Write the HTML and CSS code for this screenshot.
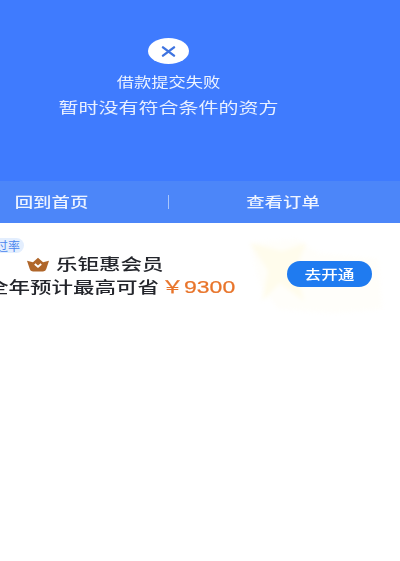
FILE: index.html
```html
<!DOCTYPE html>
<html lang="zh">
<head>
<meta charset="utf-8">
<title>借款提交失败</title>
<link rel="stylesheet" href="styles.css">
</head>
<body>
<main class="page">
  <section class="hero">
    <div class="badge">
      <svg class="badge-x" viewBox="0 0 16 12" aria-hidden="true"><path d="M2 1.5 L14 10.5 M14 1.5 L2 10.5"/></svg>
    </div>
    <p class="status">借款提交失败</p>
    <p class="reason">暂时没有符合条件的资方</p>
  </section>
  <nav class="actions">
    <a class="action action-home">回到首页</a>
    <span class="rule"></span>
    <a class="action action-order">查看订单</a>
  </nav>
  <section class="promo">
    <svg class="glow" viewBox="0 0 135 75" aria-hidden="true">
      <path class="glow-soft" d="M2 4 L50 0 L70 14 L130 20 L134 70 L86 74 L30 70 L12 46 Z"/>
      <path class="glow-star" d="M2 4 L34 12 L58 4 L48 30 L56 62 L32 44 L14 62 L20 32 Z"/>
    </svg>
    <div class="promo-copy">
      <span class="tag">过率</span>
      <div class="promo-title">
        <svg class="crown" viewBox="0 0 24 16" aria-hidden="true">
          <path class="crown-body" d="M0 4 L6.5 5.5 L12 0.5 L17.5 5.5 L24 4 L21 13 Q20.5 15.5 17.5 15.5 L6.5 15.5 Q3.5 15.5 3 13 Z"/>
          <path class="crown-mark" d="M8.5 7.5 L12 10.5 L15.5 7.5"/>
        </svg>
        <span class="wide-text">乐钜惠会员</span>
      </div>
      <div class="promo-save">
        <span class="wide-text">全年预计最高可省</span>
        <span class="amount">￥9300</span>
      </div>
    </div>
    <a class="open-btn"><span>去开通</span></a>
  </section>
</main>
</body>
</html>
```
FILE: styles.css
```css
html, body {
  margin: 0;
  padding: 0;
  background: #fff;
}
body {
  width: 400px;
  height: 561px;
  overflow: hidden;
  font-family: "Noto Sans CJK SC", "Liberation Sans", sans-serif;
}
.page {
  display: flex;
  flex-direction: column;
}
.hero {
  height: 181px;
  box-sizing: border-box;
  padding: 38px 63px 0 0;
  background: #3f7bfe;
  color: #fff;
  display: flex;
  flex-direction: column;
  align-items: center;
}
.hero p {
  margin: 0;
  white-space: nowrap;
}
.badge {
  width: 41px;
  height: 26px;
  border-radius: 50%;
  background: #fff;
  display: flex;
  align-items: center;
  justify-content: center;
}
.badge-x {
  width: 15px;
  height: 11px;
  fill: none;
  stroke: #3f74e0;
  stroke-width: 2.6;
  stroke-linecap: round;
}
.status {
  margin-top: 8px !important;
  font-size: 17.3px;
  line-height: 20px;
  transform: scaleY(0.76);
  color: #eef4ff;
}
.reason {
  margin-top: 3px !important;
  font-size: 20px;
  line-height: 24px;
  transform: scaleY(0.76);
  color: #e8f0ff;
}
.actions {
  height: 42px;
  background: #4c86f9;
  display: flex;
  align-items: center;
  margin-left: -65px;
  width: 467px;
  color: #eef4ff;
  font-size: 18.4px;
  font-weight: 500;
}
.action {
  flex: none;
  margin-top: -2px;
  text-align: center;
  transform: scaleY(0.72);
  line-height: 24px;
  white-space: nowrap;
}
.action-home {
  width: 233px;
}
.action-order {
  width: 228px;
}
.rule {
  width: 1px;
  height: 14px;
  background: #a9c6fb;
}
.promo {
  position: relative;
  height: 90px;
  display: flex;
  align-items: flex-start;
}
.glow {
  position: absolute;
  left: 248px;
  top: 16px;
  width: 135px;
  height: 75px;
  filter: blur(2px);
}
.glow-soft {
  fill: #fffefa;
}
.glow-star {
  fill: #fffcec;
}
.promo-copy {
  position: relative;
  margin-left: -13px;
  padding-top: 15px;
  width: 300px;
  flex: none;
}
.tag {
  display: block;
  width: 37px;
  height: 15px;
  border-radius: 4px 8px 8px 0;
  background: #e3eefe;
  color: #4a86ee;
  font-size: 12px;
  line-height: 15px;
  text-align: right;
  padding-right: 4px;
  box-sizing: border-box;
}
.promo-title {
  display: flex;
  align-items: center;
  margin-top: -1px;
  margin-left: 40px;
  height: 24px;
}
.crown {
  width: 22px;
  height: 15px;
  flex: none;
}
.crown-body {
  fill: #b0662a;
}
.crown-mark {
  fill: none;
  stroke: #fff;
  stroke-width: 2;
}
.wide-text {
  display: inline-block;
  white-space: nowrap;
  color: #23252b;
  font-size: 21.5px;
  line-height: 24px;
  font-weight: 500;
  transform: scaleY(0.72);
}
.promo-title .wide-text {
  margin-left: 7px;
}
.promo-save {
  display: flex;
  align-items: center;
  height: 24px;
  margin-top: -1px;
}
.amount {
  margin-left: 2px;
  color: #e8742a;
  font-family: "Liberation Sans", "Noto Sans CJK SC", sans-serif;
  font-size: 23px;
  line-height: 24px;
  white-space: nowrap;
  -webkit-text-stroke: 0.3px #e8742a;
  transform: scaleY(0.75);
}
.open-btn {
  position: relative;
  flex: none;
  margin-top: 38px;
  width: 85px;
  height: 26px;
  border-radius: 13px;
  background: #1f7bf0;
  color: #fff;
  display: flex;
  align-items: center;
  justify-content: center;
  font-size: 16.7px;
  font-weight: 500;
  white-space: nowrap;
}
.open-btn span {
  display: block;
  transform: scaleY(0.76);
}
```
